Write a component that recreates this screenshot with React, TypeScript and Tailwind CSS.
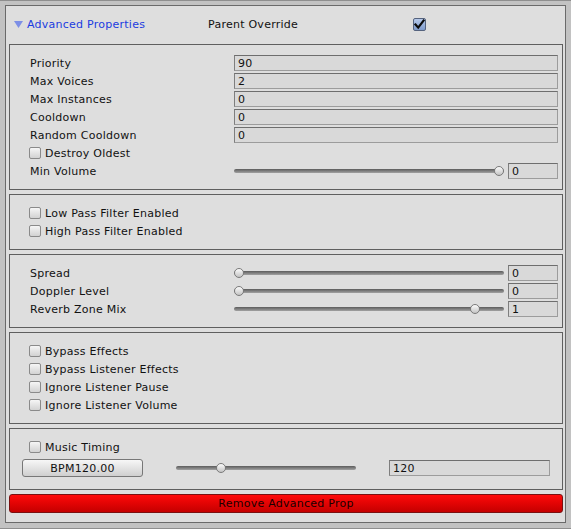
import React from "react";

const Field = ({ value, className = "" }: { value: string; className?: string }) => (
  <div
    className={`h-[16px] border border-[#9c9c9c] border-t-[#6e6e6e] border-l-[#7e7e7e] bg-[#d9d9d9] pl-[3px] flex items-center leading-none ${className}`}
  >
    {value}
  </div>
);

const Check = ({ checked = false }: { checked?: boolean }) =>
  checked ? (
    <div className="w-[13px] h-[13px] rounded-[2px] border border-[#55637e] bg-gradient-to-b from-[#b6c9ea] to-[#7f9bcb] flex items-center justify-center">
      <svg width="11" height="11" viewBox="0 0 11 11">
        <path d="M1.5 5.5 L4.2 8.6 L9.6 1.6" fill="none" stroke="#0b0b0b" strokeWidth="2.2" strokeLinecap="square" />
      </svg>
    </div>
  ) : (
    <div className="w-[12px] h-[12px] rounded-[2px] border border-[#8a8a8a] bg-gradient-to-b from-[#f6f6f6] to-[#d2d2d2]" />
  );

const Slider = ({ width, thumb }: { width: string; thumb: number }) => (
  <div className={`relative h-[12px] ${width} flex items-center`}>
    <div className="w-full h-[4px] rounded-full bg-gradient-to-b from-[#5c5c5c] to-[#a2a2a2]" />
    <div
      className="absolute top-[1px] w-[10px] h-[10px] rounded-full border border-[#7a7a7a] bg-gradient-to-b from-[#fbfbfb] to-[#c4c4c4]"
      style={{ left: thumb }}
    />
  </div>
);

const FieldRow = ({ label, value }: { label: string; value: string }) => (
  <div className="flex h-[18px] items-center">
    <div className="w-[204px]">{label}</div>
    <Field value={value} className="flex-1" />
  </div>
);

const SliderRow = ({ label, value, thumb }: { label: string; value: string; thumb: number }) => (
  <div className="flex h-[18px] items-center">
    <div className="w-[204px]">{label}</div>
    <Slider width="w-[270px]" thumb={thumb} />
    <Field value={value} className="w-[50px] ml-[4px]" />
  </div>
);

const CheckRow = ({ label }: { label: string }) => (
  <div className="flex h-[18px] items-center gap-[4px] -ml-[1px]">
    <Check />
    <span>{label}</span>
  </div>
);

const Section = ({ children, className = "" }: { children: React.ReactNode; className?: string }) => (
  <div className={`border border-[#5f5f5f] py-[9px] pl-[20px] pr-[4px] flex flex-col ${className}`}>{children}</div>
);

export default function App() {
  return (
    <div className="w-[571px] h-[529px] bg-[#c2c2c2] border-t border-b border-[#8e8e8e] pt-[4px] font-['DejaVu_Sans',sans-serif] text-[11px] tracking-[0.25px] text-[#111] leading-none">
      <div className="ml-[5px] w-[561px] h-[518px] border border-[#6a6a6a] bg-[#dedede] pl-[3px] pr-[2px] flex flex-col">
        <div className="h-[38px] flex items-center pb-[1px]">
          <svg width="9" height="7" viewBox="0 0 9 7" className="ml-[5px]">
            <path d="M0 0 H9 L4.5 7 Z" fill="#7d8fe6" />
          </svg>
          <span className="ml-[4px] w-[181px] text-[#1b3ce0]">Advanced Properties</span>
          <span className="w-[205px]">Parent Override</span>
          <Check checked />
        </div>

        <Section>
          <FieldRow label="Priority" value="90" />
          <FieldRow label="Max Voices" value="2" />
          <FieldRow label="Max Instances" value="0" />
          <FieldRow label="Cooldown" value="0" />
          <FieldRow label="Random Cooldown" value="0" />
          <CheckRow label="Destroy Oldest" />
          <SliderRow label="Min Volume" value="0" thumb={260} />
        </Section>

        <Section className="mt-[4px]">
          <CheckRow label="Low Pass Filter Enabled" />
          <CheckRow label="High Pass Filter Enabled" />
        </Section>

        <Section className="mt-[4px]">
          <SliderRow label="Spread" value="0" thumb={0} />
          <SliderRow label="Doppler Level" value="0" thumb={0} />
          <SliderRow label="Reverb Zone Mix" value="1" thumb={236} />
        </Section>

        <Section className="mt-[4px]">
          <CheckRow label="Bypass Effects" />
          <CheckRow label="Bypass Listener Effects" />
          <CheckRow label="Ignore Listener Pause" />
          <CheckRow label="Ignore Listener Volume" />
        </Section>

        <div className="mt-[4px] border border-[#5f5f5f] pt-[9px] pb-[11px] flex flex-col">
          <div className="pl-[19px] flex h-[18px] items-center gap-[4px]">
            <Check />
            <span>Music Timing</span>
          </div>
          <div className="mt-[2px] pl-[12px] flex h-[20px] items-center">
            <div className="w-[121px] h-[18px] rounded-[3px] border border-[#777] bg-gradient-to-b from-[#f7f7f7] to-[#cfcfcf] flex items-center justify-center">
              BPM120.00
            </div>
            <Slider width="w-[180px] ml-[33px]" thumb={40} />
            <Field value="120" className="w-[161px] ml-[33px]" />
          </div>
        </div>

        <div className="mt-[4px] h-[19px] rounded-[3px] border border-[#7a1010] bg-gradient-to-b from-[#ff0a0a] to-[#c50000] flex items-center justify-center text-[#1a0000]">
          Remove Advanced Prop
        </div>
      </div>
    </div>
  );
}
